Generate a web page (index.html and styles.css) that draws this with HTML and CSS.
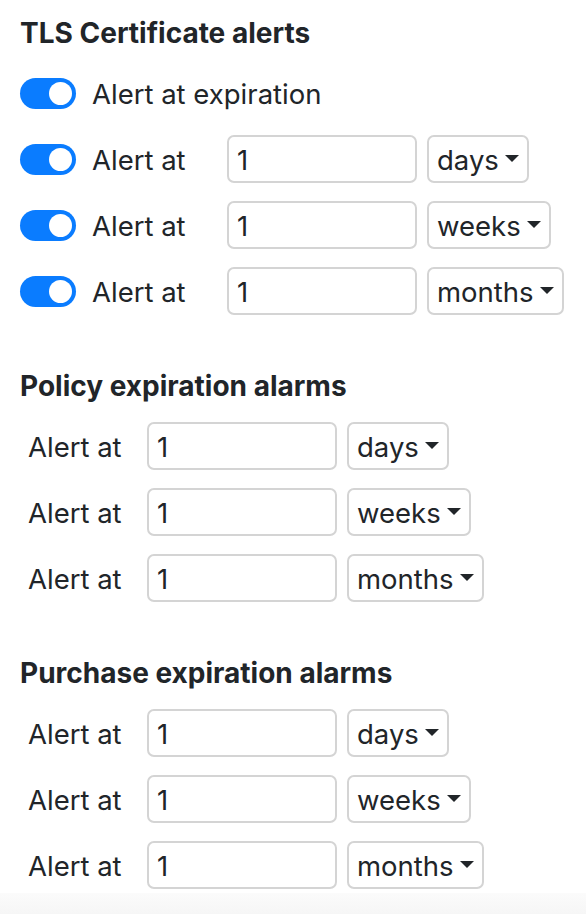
FILE: index.html
```html
<!DOCTYPE html>
<html>
<head>
<meta charset="utf-8">
<link rel="stylesheet" href="styles.css">
</head>
<body>
<div class="page">
  <section class="group">
    <h2 class="title">TLS Certificate alerts</h2>
    <div class="row">
      <span class="switch"><span class="knob"></span></span>
      <span class="label">Alert at expiration</span>
    </div>
    <div class="row">
      <span class="switch"><span class="knob"></span></span>
      <span class="label label-sw">Alert at</span>
      <span class="input">1</span>
      <span class="select">days<span class="caret"></span></span>
    </div>
    <div class="row">
      <span class="switch"><span class="knob"></span></span>
      <span class="label label-sw">Alert at</span>
      <span class="input">1</span>
      <span class="select">weeks<span class="caret"></span></span>
    </div>
    <div class="row">
      <span class="switch"><span class="knob"></span></span>
      <span class="label label-sw">Alert at</span>
      <span class="input">1</span>
      <span class="select">months<span class="caret"></span></span>
    </div>
  </section>

  <section class="group">
    <h2 class="title">Policy expiration alarms</h2>
    <div class="row plain">
      <span class="label label-plain">Alert at</span>
      <span class="input">1</span>
      <span class="select">days<span class="caret"></span></span>
    </div>
    <div class="row plain">
      <span class="label label-plain">Alert at</span>
      <span class="input">1</span>
      <span class="select">weeks<span class="caret"></span></span>
    </div>
    <div class="row plain">
      <span class="label label-plain">Alert at</span>
      <span class="input">1</span>
      <span class="select">months<span class="caret"></span></span>
    </div>
  </section>

  <section class="group">
    <h2 class="title">Purchase expiration alarms</h2>
    <div class="row plain">
      <span class="label label-plain">Alert at</span>
      <span class="input">1</span>
      <span class="select">days<span class="caret"></span></span>
    </div>
    <div class="row plain">
      <span class="label label-plain">Alert at</span>
      <span class="input">1</span>
      <span class="select">weeks<span class="caret"></span></span>
    </div>
    <div class="row plain">
      <span class="label label-plain">Alert at</span>
      <span class="input">1</span>
      <span class="select">months<span class="caret"></span></span>
    </div>
  </section>
</div>
<div class="footer"></div>
</body>
</html>
```

FILE: styles.css
```css
html, body {
  margin: 0;
  padding: 0;
  background: #ffffff;
}
body {
  font-family: Inter, "Liberation Sans", sans-serif;
  color: #212529;
  font-size: 27.5px;
  height: 914px;
  overflow: hidden;
  display: flex;
  flex-direction: column;
}
.page {
  padding: 15px 0 0 20px;
  display: flex;
  flex-direction: column;
  gap: 53px;
}
.group {
  display: flex;
  flex-direction: column;
  gap: 18px;
}
.title {
  margin: 0;
  height: 36px;
  line-height: 36px;
  font-size: 28px;
  font-weight: 700;
  white-space: nowrap;
}
.row {
  height: 48px;
  display: flex;
  align-items: center;
}
.switch {
  width: 56px;
  height: 31px;
  border-radius: 16px;
  background: #0a7cff;
  display: flex;
  align-items: center;
  justify-content: flex-end;
  padding-right: 4px;
  box-sizing: border-box;
  flex: none;
}
.knob {
  width: 23px;
  height: 23px;
  border-radius: 50%;
  background: #ffffff;
}
.label {
  margin-left: 16px;
  padding-top: 1px;
  white-space: nowrap;
}
.label-sw {
  width: 135px;
}
.label-plain {
  margin-left: 8px;
  width: 119px;
}
.input {
  width: 190px;
  height: 48px;
  box-sizing: border-box;
  border: 2px solid #d4d4d4;
  border-radius: 7px;
  padding: 1px 0 0 8px;
  display: flex;
  align-items: center;
  flex: none;
}
.select {
  margin-left: 10px;
  height: 48px;
  box-sizing: border-box;
  border: 2px solid #d4d4d4;
  border-radius: 7px;
  padding: 1px 8px 0 8px;
  display: flex;
  align-items: center;
  gap: 6px;
  flex: none;
}
.caret {
  width: 0;
  height: 0;
  border-left: 7px solid transparent;
  border-right: 7px solid transparent;
  border-top: 7px solid #212529;
  margin-top: -3px;
}
.footer {
  flex: 1;
  margin-top: 4px;
  background: linear-gradient(#fbfbfb, #f6f6f6);
}
```
